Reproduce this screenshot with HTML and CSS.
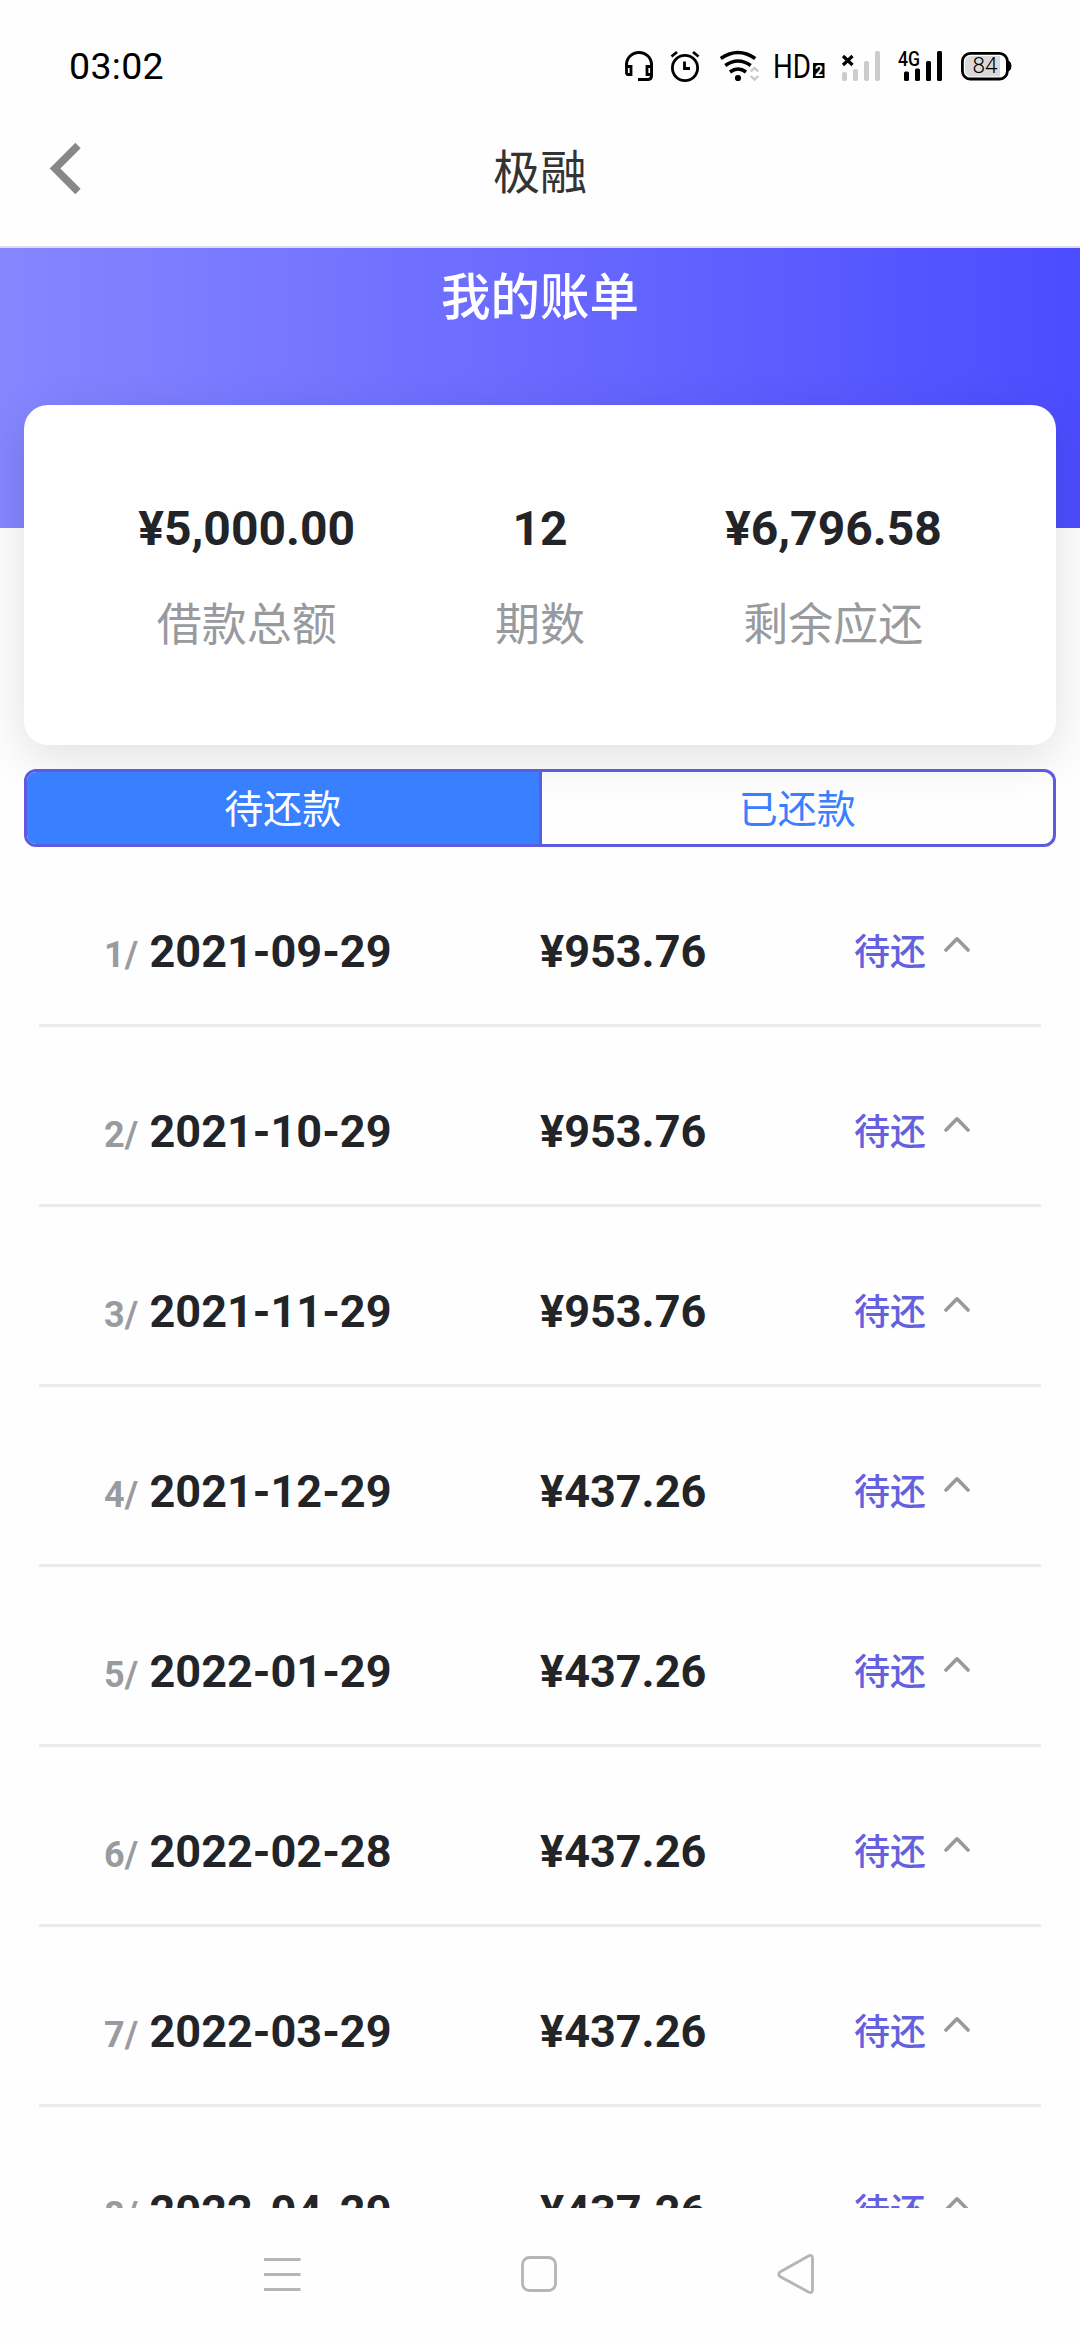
FILE: index.html
```html
<!DOCTYPE html>
<html lang="zh-CN">
<head>
<meta charset="utf-8">
<title>极融</title>
<link rel="stylesheet" href="styles.css">
</head>
<body>
<svg class="defs" width="0" height="0"><symbol id="up" viewBox="0 0 26 16"><path d="M2 14 13 2.800 24 14" fill="none" stroke="#999" stroke-width="3.600" stroke-linecap="round" stroke-linejoin="round"/></symbol></svg>
<div class="screen">
  <div class="status-bar">
    <span class="time">03:02</span>
    <div class="status-icons">
      <svg width="30" height="32" viewBox="624 50 30 32"><path d="M626.5 66.500V64.500A12.500 12 0 0 1 651.500 64.500V75.500Q651.500 79.500 647.500 79.500H638" fill="none" stroke="#000" stroke-width="3"/><path d="M626.500 66.500H631V74.500H628Q626.500 74.500 626.500 72.500ZM651.500 66.500H647V74.500H651.500Z" fill="#fff" stroke="#000" stroke-width="2.800"/></svg>
      <svg class="alarm" width="30" height="32" viewBox="670 50 30 32"><g fill="none" stroke="#000" stroke-width="2.800"><circle cx="685" cy="68" r="12.600"/><path d="M684.500 61.500V68.500H690M671.500 56.500 677 52M698.500 56.500 693 52"/></g></svg>
      <svg class="wifi" width="40" height="32" viewBox="719 50 40 32"><g fill="none" stroke="#000" stroke-width="3.600"><path d="M720.800 58.500Q738 46.500 755.200 58.500M725.300 65.500Q738 56.500 750.700 65.500M730 72Q738 66 746 72"/></g><circle cx="738" cy="78" r="3.100"/><path d="M750.800 71.500 754.500 68 758.200 71.500M750.800 76 754.500 79.500 758.200 76" fill="none" stroke="#c8c8c8" stroke-width="2.400"/></svg>
      <svg class="hd" width="52" height="32" viewBox="773 50 52 32"><text x="773" y="78" class="hd-text" textLength="38" lengthAdjust="spacingAndGlyphs">HD</text><rect x="813" y="63" width="11.500" height="15"/><text x="815" y="75.500" class="sim">2</text></svg>
      <svg class="nosim" width="40" height="32" viewBox="841 50 40 32"><path d="M843 56 852.500 65M852.500 56 843 65" stroke="#000" stroke-width="3.200"/><g fill="#ccc"><rect x="842" y="72" width="5" height="9" rx="2"/><rect x="853" y="69" width="5" height="12" rx="2"/><rect x="864" y="61" width="5" height="20" rx="2"/><rect x="875" y="51" width="5" height="30" rx="2"/></g></svg>
      <svg class="sig" width="46" height="32" viewBox="897 50 46 32"><text x="898" y="65.500" class="g4" textLength="22" lengthAdjust="spacingAndGlyphs">4G</text><rect x="904" y="71.500" width="5" height="9.500" rx="1.500"/><rect x="915" y="68.500" width="5" height="12.500" rx="1.500"/><rect x="926" y="61" width="5" height="20" rx="1.500"/><rect x="937" y="51" width="5" height="30" rx="1.500"/></svg>
      <svg class="bat" width="52" height="32" viewBox="960 50 52 32"><rect x="962.400" y="53.400" width="45" height="25.600" rx="8" fill="#fff" stroke="#000" stroke-width="2.800"/><path d="M971 56H1000V76.500H971Q965 76.500 965 70V62.500Q965 56 971 56Z" fill="#d9d9d9"/><path d="M1008.500 61Q1011 62 1011 66T1008.500 71Z" stroke="#000"/><text x="972.500" y="73" class="pct" textLength="25">84</text></svg>
    </div>
  </div>
  <div class="header">
    <svg class="back" width="34" height="54" viewBox="0 0 34 54"><path d="M30 3.500 7 26.500 30 49.500" fill="none" stroke="#888" stroke-width="7.500"/></svg>
    <h1>极融</h1>
  </div>
  <div class="content">
    <div class="banner">我的账单</div>
    <div class="card">
      <div class="stat"><b>¥5,000.00</b><span>借款总额</span></div>
      <div class="stat"><b>12</b><span>期数</span></div>
      <div class="stat"><b>¥6,796.58</b><span>剩余应还</span></div>
    </div>
    <div class="tabs"><div class="tab active">待还款</div><div class="tab">已还款</div></div>
    <div class="list">
      <div class="row"><i>1/</i><b>2021-09-29</b><b class="amt">¥953.76</b><span>待还</span><svg><use href="#up"/></svg></div>
      <div class="row"><i>2/</i><b>2021-10-29</b><b class="amt">¥953.76</b><span>待还</span><svg><use href="#up"/></svg></div>
      <div class="row"><i>3/</i><b>2021-11-29</b><b class="amt">¥953.76</b><span>待还</span><svg><use href="#up"/></svg></div>
      <div class="row"><i>4/</i><b>2021-12-29</b><b class="amt">¥437.26</b><span>待还</span><svg><use href="#up"/></svg></div>
      <div class="row"><i>5/</i><b>2022-01-29</b><b class="amt">¥437.26</b><span>待还</span><svg><use href="#up"/></svg></div>
      <div class="row"><i>6/</i><b>2022-02-28</b><b class="amt">¥437.26</b><span>待还</span><svg><use href="#up"/></svg></div>
      <div class="row"><i>7/</i><b>2022-03-29</b><b class="amt">¥437.26</b><span>待还</span><svg><use href="#up"/></svg></div>
      <div class="row"><i>8/</i><b>2022-04-29</b><b class="amt">¥437.26</b><span>待还</span><svg><use href="#up"/></svg></div>
    </div>
  </div>
  <div class="nav">
    <svg width="40" height="44" viewBox="262 2252 40 44"><path d="M264 2259.500H300.500M264 2274.500H300.500M264 2289.500H300.500" stroke="#b5b5b5" stroke-width="3"/></svg>
    <svg width="40" height="44" viewBox="520 2252 40 44"><rect x="523.500" y="2257.500" width="33" height="33" rx="7" fill="none" stroke="#b5b5b5" stroke-width="2.800"/></svg>
    <svg width="40" height="44" viewBox="776 2252 40 44"><path d="M780 2272 808.500 2256Q812.500 2254 812.500 2258.500V2289.500Q812.500 2294 808.500 2292L780 2276.500Q777.500 2274.200 780 2272Z" fill="none" stroke="#b5b5b5" stroke-width="2.800"/></svg>
  </div>
</div>
</body>
</html>
```
FILE: styles.css
```css
* { box-sizing: border-box; }
body { margin: 0; background: #fff; font-family: Roboto, "Noto Sans CJK SC", sans-serif; }
.defs { display: block; height: 0; }
.screen { width: 1080px; height: 2340px; display: flex; flex-direction: column; overflow: hidden; background: #fefefe; }
.status-bar { height: 100px; padding: 30px 68px 0 69px; display: flex; justify-content: space-between; flex: none; }
.time { font-size: 37.5px; line-height: 72px; letter-spacing: .3px; color: #000; }
.status-icons { display: flex; padding-top: 20px; }
.status-icons svg { display: block; flex: none; overflow: visible; }
.alarm { margin-left: 16px; }
.wifi { margin-left: 19px; }
.hd { margin-left: 14px; }
.hd-text { font-size: 33.5px; }
.sim { font-size: 14px; font-weight: 700; fill: #fff; }
.nosim { margin-left: 16px; }
.sig { margin-left: 16px; }
.bat { margin-left: 17px; }
.g4 { font-size: 20px; font-weight: 500; }
.pct { font-size: 22.5px; font-weight: 300; }
.header { height: 148px; flex: none; border-bottom: 2px solid #dcdfeb; display: grid; grid-template-columns: 34px 1fr 34px; padding: 0 48px; }
.back { margin-top: 42px; }
h1 { margin: 0; font-size: 47px; font-weight: 400; line-height: 70px; padding-top: 38px; text-align: center; color: #333; }
.content { height: 1960px; flex: none; overflow: hidden; }
.banner { height: 280px; background: linear-gradient(90deg, #8686ff, #4c4cff); color: #fff; font-size: 49.5px; font-weight: 500; line-height: 72px; padding-top: 14px; text-align: center; }
.card { position: relative; height: 340px; margin: -123px 24px 0; border-radius: 24px; background: #fff; box-shadow: 0 12px 48px rgba(0,0,0,.12); display: flex; justify-content: center; gap: 140px; padding-top: 94px; }
.stat { display: flex; flex-direction: column; align-items: center; }
.stat b { font-size: 48px; line-height: 60px; color: #222428; }
.stat span { font-size: 45px; line-height: 66px; margin-top: 34px; color: #999a9e; }
.tabs { position: relative; height: 78px; margin: 24px 24px 0; border: 3px solid #5f5be0; border-radius: 12px; display: flex; overflow: hidden; }
.tab { flex: 1; text-align: center; font-size: 39px; line-height: 76px; color: #3880ff; }
.tab.active { background: #3880ff; color: #fff; border-right: 3px solid #5f5be0; }
.row { height: 180px; margin: 0 39px; padding: 75px 0 0 65px; border-bottom: 3px solid #ebebeb; display: flex; align-items: baseline; }
.list { position: relative; }
.row i { width: 45.5px; font-style: normal; font-weight: 700; font-size: 36px; color: #999b9f; line-height: 60px; }
.row b { width: 390.5px; font-size: 45px; line-height: 60px; color: #222428; }
.row .amt { width: 314px; }
.row span { position: relative; top: -2px; width: 72px; font-size: 36px; font-weight: 500; line-height: 50px; color: #6460df; }
.row svg { width: 26px; height: 16px; margin-left: 18px; align-self: flex-start; margin-top: 14px; }
.nav { flex: 1; display: flex; padding: 44px 264px 0 262px; justify-content: space-between; }
```
